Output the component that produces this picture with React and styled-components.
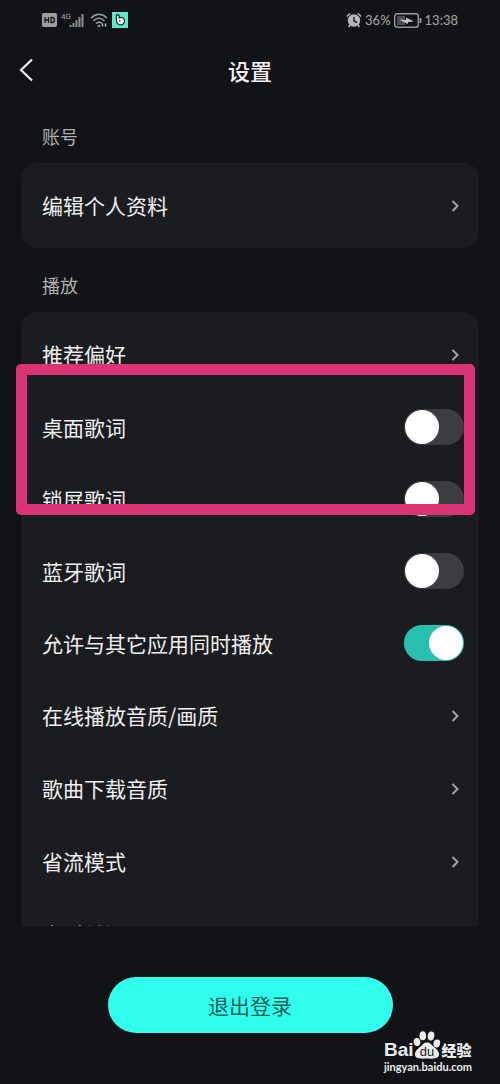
import React, { useState } from 'react';
import styled, { createGlobalStyle } from 'styled-components';

const GlobalStyle = createGlobalStyle`
  * {
    box-sizing: border-box;
  }
  body {
    margin: 0;
    background: #121317;
    color: #f0f0f1;
    font-family: 'Noto Sans CJK SC', sans-serif;
  }
`;

const Page = styled.div`
  position: relative;
  display: flex;
  flex-direction: column;
  height: 100vh;
  overflow: hidden;
`;

const StatusBar = styled.div`
  display: flex;
  flex-shrink: 0;
  justify-content: space-between;
  align-items: center;
  height: 40px;
  padding: 0 42px;
  color: #a6a7a9;
  font-family: Lato, sans-serif;
  font-size: 13px;
`;

const StatusGroup = styled.div`
  display: flex;
  align-items: center;
  gap: ${props => props.$gap}px;
`;

const Header = styled.header`
  display: grid;
  flex-shrink: 0;
  grid-template-columns: 1fr auto 1fr;
  align-items: center;
  height: 59px;
  padding: 1px 18px 0;
`;

const BackButton = styled.button`
  display: flex;
  justify-self: start;
  padding: 0;
  border: 0;
  background: none;
  color: #f4f4f5;
  cursor: pointer;
`;

const Title = styled.h1`
  margin: 0;
  font-size: 22px;
  font-weight: 500;
  line-height: 32px;
`;

const Content = styled.main`
  flex: 1;
  min-height: 0;
  padding: 0 21px;
  overflow-y: auto;
  scrollbar-width: none;
`;

const SectionTitle = styled.h2`
  margin: 0;
  padding: 24px 21px 14px;
  color: #aeafb1;
  font-size: 18px;
  font-weight: 400;
  line-height: 26px;
`;

const Card = styled.div`
  position: relative;
  padding: 6px 0;
  border-radius: 15px;
  background: #1b1c20;
`;

const Row = styled.div`
  display: flex;
  align-items: center;
  justify-content: space-between;
  width: 100%;
  height: ${props => props.$height}px;
  padding: 0 15px 0 21px;
  border: 0;
  background: none;
  color: inherit;
  font-family: inherit;
  font-size: 21px;
  line-height: 31px;
  text-align: left;
  cursor: pointer;
`;

const Chevron = styled.svg`
  width: 8px;
  height: 14px;
  margin-right: 5px;
`;

const Switch = styled.input`
  display: flex;
  align-items: center;
  justify-content: flex-start;
  appearance: none;
  width: 60px;
  height: 36px;
  margin: 0;
  padding: 0 1px;
  border-radius: 18px;
  background: #3c3d40;
  cursor: pointer;

  &::before {
    content: '';
    width: 34px;
    height: 34px;
    border-radius: 50%;
    background: #fff;
  }

  &:checked {
    justify-content: flex-end;
    background: #29bfae;
  }
`;

const Highlight = styled.div`
  position: absolute;
  top: 52px;
  left: -5px;
  right: 4px;
  height: 151px;
  border: 11px solid #da3475;
  border-radius: 5px;
  pointer-events: none;
`;

const Footer = styled.footer`
  display: flex;
  flex-shrink: 0;
  justify-content: center;
  padding: 51px 0;
`;

const LogoutButton = styled.button`
  width: 57%;
  height: 56px;
  padding: 0;
  border: 0;
  border-radius: 28px;
  background: #31ffed;
  color: #0f5f5b;
  font-family: inherit;
  font-size: 21px;
  line-height: 31px;
  cursor: pointer;
`;

const Watermark = styled.div`
  position: absolute;
  right: 28px;
  bottom: 9px;
  color: #ececec;
  pointer-events: none;
`;

const Brand = styled.div`
  display: flex;
  align-items: flex-end;
  height: 28px;
`;

const BrandLatin = styled.span`
  font-family: 'Liberation Sans', sans-serif;
  font-size: 19px;
  font-weight: 700;
  line-height: 18px;
`;

const BrandHan = styled.span`
  font-size: 15px;
  font-weight: 900;
  line-height: 18px;
`;

const Site = styled.div`
  font-family: Lato, sans-serif;
  font-size: 11px;
  font-weight: 700;
  line-height: 16px;
`;

const HdIcon = () => (
  <svg width="15" height="14" viewBox="0 0 15 14">
    <rect width="15" height="14" rx="2" fill="#9c9d9f" />
    <path
      d="M3 4v6M6.500 4v6M3 7h3.500M9 4.500v5h1.200c3 0 3-5 0-5z"
      fill="none"
      stroke="#17181b"
      strokeWidth="1.300"
    />
  </svg>
);

const SignalIcon = () => (
  <svg width="25" height="18" viewBox="0 0 25 18">
    <text x="0" y="8" fill="#a6a7a9" fontFamily="Roboto" fontSize="8">
      4G
    </text>
    <path
      d="M9.500 16v-2M12.500 16v-4M15.500 16V9M18.500 16V6M21.500 16V3"
      stroke="#8f9092"
      strokeWidth="2"
    />
  </svg>
);

const WifiIcon = () => (
  <svg width="18" height="16" viewBox="0 0 18 16">
    <path
      d="M1 6C6 1 12 1 17 6M3.500 9c3.500-3.500 7.500-3.500 11 0M6 11.500c2-1.800 4-1.800 6 0"
      fill="none"
      stroke="#98999b"
      strokeWidth="1.600"
    />
    <circle cx="9" cy="14" r="1.300" fill="#98999b" />
    <path d="M12.500 14.500v-3M15.500 11.500v3" stroke="#c0c1c3" strokeWidth="1.400" />
  </svg>
);

const AppIcon = () => (
  <svg width="16" height="16" viewBox="0 0 16 16">
    <rect width="16" height="16" fill="#63e6c8" />
    <path
      d="M4.500 3c2-.8 3 .5 2.800 3 3-1.400 5.500.2 5.200 3.200-.3 3.300-3.700 4.600-6.200 3C3.500 10.500 4.500 6 4.500 3z"
      fill="#effffb"
      stroke="#10312d"
      strokeWidth="1.300"
    />
    <path d="M7 8.500l1.500 1" stroke="#10312d" strokeWidth="1.200" />
  </svg>
);

const AlarmIcon = () => (
  <svg width="16" height="16" viewBox="0 0 16 16">
    <circle cx="8" cy="8.500" r="6.200" fill="#b5b6b8" />
    <path
      d="M1 4.500L4 1.500M12 1.500l3 3M4 13l-1.500 2M12 13l1.500 2"
      stroke="#b5b6b8"
      strokeWidth="1.600"
    />
    <path d="M8 5v4l3 1.500" fill="none" stroke="#1b1c20" strokeWidth="1.400" />
  </svg>
);

const BatteryIcon = () => (
  <svg width="28" height="15" viewBox="0 0 28 15">
    <rect
      x="0.700"
      y="0.700"
      width="23.600"
      height="13.600"
      rx="2.500"
      fill="none"
      stroke="#97989a"
      strokeWidth="1.400"
    />
    <rect x="3" y="3" width="8" height="9" fill="#4c4d50" />
    <path d="M5 6.500l7 .5V4.500l8 4-6 .5v2z" fill="#c4c5c7" />
    <path d="M26.500 5v5" stroke="#97989a" strokeWidth="1.800" />
  </svg>
);

const PawIcon = () => (
  <svg width="28" height="28" viewBox="0 0 28 28">
    <g fill="#ececec">
      <ellipse cx="4" cy="11" rx="3.300" ry="4" transform="rotate(-12 4 11)" />
      <ellipse cx="9.800" cy="4.800" rx="3.300" ry="4.500" />
      <ellipse cx="18" cy="5" rx="3.300" ry="4.500" transform="rotate(10 18 5)" />
      <ellipse cx="23.800" cy="12.500" rx="3.300" ry="4" transform="rotate(14 23.800 12.500)" />
      <path d="M14 11.500c3.500 0 4.500 2.500 7.500 5s5 4.500 4.500 7.500c-.6 3.500-5 4-12 3.500-7 .5-11.400 0-12-3.500-.5-3 1.500-5 4.500-7.500s4-5 7.500-5z" />
    </g>
    <text
      x="14"
      y="25"
      fill="#17181b"
      fontFamily="Liberation Sans"
      fontSize="13"
      textAnchor="middle"
    >
      du
    </text>
  </svg>
);

const LinkRow = ({ label }) => (
  <Row as="button" type="button" $height={73}>
    <span>{label}</span>
    <Chevron viewBox="0 0 8 14" aria-hidden="true">
      <path d="M1.500 2l5 5-5 5" fill="none" stroke="#a3a4a6" strokeWidth="2" />
    </Chevron>
  </Row>
);

const SwitchRow = ({ id, label, defaultChecked = false }) => {
  const [checked, setChecked] = useState(defaultChecked);

  return (
    <Row as="label" htmlFor={id} $height={72}>
      <span>{label}</span>
      <Switch
        id={id}
        type="checkbox"
        checked={checked}
        onChange={e => setChecked(e.target.checked)}
      />
    </Row>
  );
};

const App = () => (
  <>
    <GlobalStyle />
    <Page>
      <StatusBar>
        <StatusGroup $gap={4}>
          <HdIcon />
          <SignalIcon />
          <WifiIcon />
          <AppIcon />
        </StatusGroup>
        <StatusGroup $gap={3}>
          <AlarmIcon />
          <span>36%</span>
          <BatteryIcon />
          <span>13:38</span>
        </StatusGroup>
      </StatusBar>
      <Header>
        <BackButton type="button" aria-label="返回">
          <svg width="16" height="24" viewBox="0 0 16 24">
            <path d="M14 1.500L3 12l11 10.500" fill="none" stroke="currentColor" strokeWidth="2.200" />
          </svg>
        </BackButton>
        <Title>设置</Title>
      </Header>
      <Content>
        <SectionTitle>账号</SectionTitle>
        <Card>
          <LinkRow label="编辑个人资料" />
        </Card>
        <SectionTitle>播放</SectionTitle>
        <Card>
          <LinkRow label="推荐偏好" />
          <SwitchRow id="desktop-lyrics" label="桌面歌词" />
          <SwitchRow id="lock-lyrics" label="锁屏歌词" />
          <SwitchRow id="bluetooth-lyrics" label="蓝牙歌词" />
          <SwitchRow id="mix-playback" label="允许与其它应用同时播放" defaultChecked />
          <LinkRow label="在线播放音质/画质" />
          <LinkRow label="歌曲下载音质" />
          <LinkRow label="省流模式" />
          <LinkRow label="定时关闭" />
          <Highlight />
        </Card>
      </Content>
      <Footer>
        <LogoutButton type="button">退出登录</LogoutButton>
      </Footer>
      <Watermark>
        <Brand>
          <BrandLatin>Bai</BrandLatin>
          <PawIcon />
          <BrandHan>经验</BrandHan>
        </Brand>
        <Site>jingyan.baidu.com</Site>
      </Watermark>
    </Page>
  </>
);

export default App;
